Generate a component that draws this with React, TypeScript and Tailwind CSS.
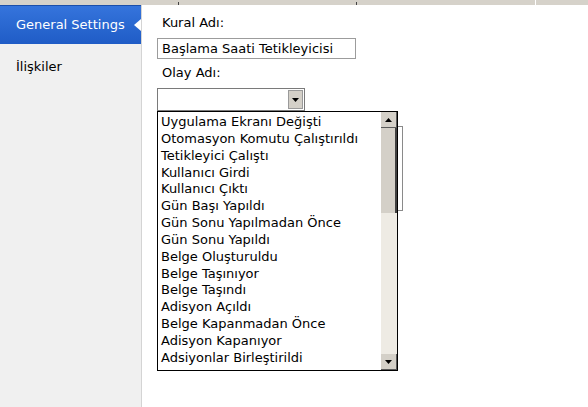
const events = [
  "Uygulama Ekranı Değişti",
  "Otomasyon Komutu Çalıştırıldı",
  "Tetikleyici Çalıştı",
  "Kullanıcı Girdi",
  "Kullanıcı Çıktı",
  "Gün Başı Yapıldı",
  "Gün Sonu Yapılmadan Önce",
  "Gün Sonu Yapıldı",
  "Belge Oluşturuldu",
  "Belge Taşınıyor",
  "Belge Taşındı",
  "Adisyon Açıldı",
  "Belge Kapanmadan Önce",
  "Adisyon Kapanıyor",
  "Adsiyonlar Birleştirildi",
];

function Arrow({ up }: { up?: boolean }) {
  return (
    <svg width="7" height="4" viewBox="0 0 7 4" className={up ? "" : "rotate-180"}>
      <path d="M3.5 0 L7 4 L0 4 Z" fill="#000" />
    </svg>
  );
}

export default function App() {
  return (
    <div className="relative flex h-[407px] w-[588px] flex-col overflow-hidden bg-white font-['Tahoma','DejaVu_Sans',sans-serif] text-[13px] text-black">
      {/* top strip */}
      <div className="relative flex h-[5px] shrink-0">
        <div className="w-[535px] bg-[#d6d2ca]" />
        <div className="w-px bg-white" />
        <div className="flex-1 bg-[#d6d2ca]" />
        <div className="absolute bottom-0 left-[178px] h-[3px] w-px bg-[#444]" />
        <div className="absolute bottom-0 left-[356px] h-[3px] w-px bg-[#444]" />
      </div>

      <div className="flex flex-1">
        {/* sidebar */}
        <div className="w-[142px] shrink-0 border-r border-[#d4d4d4] bg-[#f0f0f0]">
          <div className="relative flex h-[39px] items-center border-t border-[#1b4faa] bg-gradient-to-b from-[#3574dc] to-[#1f5cc6] pl-[16px] text-[13px] text-white">
            General Settings
            <div className="absolute right-0 top-[13px] h-0 w-0 border-y-[6px] border-r-[7px] border-y-transparent border-r-white" />
          </div>
          <div className="pl-[16px] pt-[13px]">İlişkiler</div>
        </div>

        {/* content */}
        <div className="relative flex-1 pl-[15px] pt-[10px]">
          <div className="pl-[5px] leading-[16px]">Kural Adı:</div>
          <div className="mt-[7px] flex h-[21px] w-[199px] items-center border border-[#9c9c9c] pl-[4px]">
            Başlama Saati Tetikleyicisi
          </div>
          <div className="mt-[6px] pl-[5px] leading-[16px]">Olay Adı:</div>
          <div className="mt-[7px] flex h-[23px] w-[148px] border border-[#7a7a7a]">
            <div className="flex-1" />
            <div className="my-px mr-px flex w-[15px] items-center justify-center border border-[#9a9a9a] bg-[#d4d0c8]">
              <Arrow />
            </div>
          </div>

          {/* hidden control behind the list */}
          <div className="absolute left-[247px] top-[121px] h-[85px] w-[14px] border border-[#8a8a8a]" />

          {/* dropdown list */}
          <div className="relative flex h-[260px] w-[241px] border border-black bg-white">
            <div className="flex-1 pl-[3px] pt-[1px]">
              {events.map((e) => (
                <div key={e} className="h-[16.85px] leading-[17px] whitespace-nowrap">
                  {e}
                </div>
              ))}
            </div>
            <div className="flex w-[16px] flex-col bg-[#eeebe4]">
              <div className="flex h-[16px] items-center justify-center border-b border-r border-[#5a5a5a] border-l-[#fff] border-t-[#fff] bg-[#d4d0c8]">
                <Arrow up />
              </div>
              <div className="h-[85px] border-r-2 border-[#404040] bg-[#d4d0c8]" />
              <div className="flex-1" />
              <div className="flex h-[16px] items-center justify-center border-b border-r border-[#5a5a5a] bg-[#d4d0c8]">
                <Arrow />
              </div>
            </div>
          </div>
        </div>
      </div>
    </div>
  );
}
